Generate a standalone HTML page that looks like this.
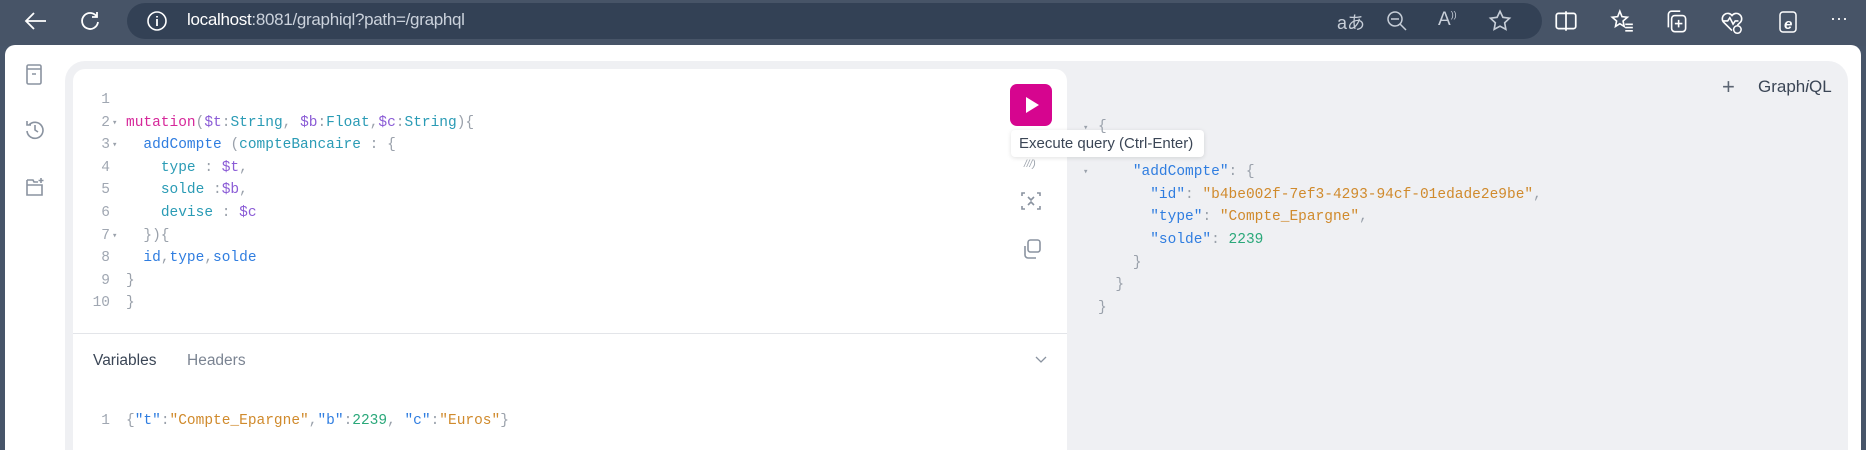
<!DOCTYPE html>
<html><head><meta charset="utf-8"><style>
*{margin:0;padding:0;box-sizing:border-box}
html,body{width:1866px;height:450px;overflow:hidden}
body{background:#475569;font-family:"Liberation Sans",sans-serif;position:relative}
.abs{position:absolute}
.top{left:0;top:0;width:1866px;height:46px;background:#475467}
.pill{left:127px;top:3px;height:36px;border-radius:18px;background:#334155;width:1415px}
.url{left:187px;top:10px;font-size:17px;color:#cbd2dc;letter-spacing:-0.3px}
.url b{color:#fff;font-weight:normal}
.content{left:5px;top:45px;width:1856px;height:405px;background:#fff;border-radius:10px 10px 0 0}
.main{left:65px;top:61px;width:1783px;height:389px;background:#eff0f3;border-radius:20px 20px 0 0}
.ed{left:73px;top:69px;width:994px;height:381px;background:#fff;border-radius:12px 12px 0 0}
.code{font-family:"Liberation Mono",monospace;font-size:14.5px;line-height:22.6px;white-space:pre}
.ln{color:#a0a7b2;text-align:right;width:36px}
.k{color:#d6289a}.v{color:#8b5cd6}.t{color:#2a9bb5}.f{color:#2f7de0}.p{color:#9aa1ab}.s{color:#d08a2c}.n{color:#2aa87a}
.run{left:1010px;top:84px;width:42px;height:42px;background:#d6058f;border-radius:7px}
.tip{left:1011px;top:130px;width:193px;height:27px;background:#fff;border-radius:4px;box-shadow:0 1px 5px rgba(0,0,0,.12);font-size:15px;color:#3b4656;padding:5px 0 0 8px;white-space:nowrap}
.icon{stroke:#8a93a0;fill:none;stroke-width:1.6}
</style></head><body>
<div class="abs top"></div>
<div class="abs pill"></div>
<svg class="abs" style="left:22px;top:9px" width="28" height="24" viewBox="0 0 28 24"><path d="M24 12H5M12 4L4 12l8 8" stroke="#fff" stroke-width="1.8" fill="none"/></svg>
<svg class="abs" style="left:78px;top:9px" width="24" height="24" viewBox="0 0 24 24"><path d="M19 8A8 8 0 1 0 20 13M19 3v5h-5" stroke="#fff" stroke-width="1.8" fill="none"/></svg>
<svg class="abs" style="left:146px;top:10px" width="22" height="22" viewBox="0 0 22 22"><circle cx="11" cy="11" r="9" stroke="#fff" stroke-width="1.6" fill="none"/><path d="M11 9v7M11 6v1.5" stroke="#fff" stroke-width="1.8"/></svg>
<div class="abs url"><b>localhost</b>:8081/graphiql?path=/graphql</div>
<div class="abs" style="left:1337px;top:9px;color:#c7ced8;font-size:18px">aあ</div>
<svg class="abs" style="left:1385px;top:9px" width="24" height="24" viewBox="0 0 24 24"><circle cx="10" cy="10" r="7" stroke="#c7ced8" stroke-width="1.5" fill="none"/><path d="M6 10h8M15 15l6 6" stroke="#c7ced8" stroke-width="1.5"/></svg>
<div class="abs" style="left:1438px;top:9px;color:#c7ced8;font-size:19px">A<sup style="font-size:9px">))</sup></div>
<svg class="abs" style="left:1487px;top:8px" width="26" height="26" viewBox="0 0 24 24"><path d="M12 3l2.7 5.6 6.1.8-4.5 4.2 1.1 6.1L12 16.8 6.6 19.7l1.1-6.1L3.2 9.4l6.1-.8z" stroke="#c7ced8" stroke-width="1.5" fill="none"/></svg>
<svg class="abs" style="left:1553px;top:8px" width="26" height="26" viewBox="0 0 24 24"><rect x="3" y="5" width="18" height="14" rx="2" stroke="#fff" stroke-width="1.6" fill="none"/><path d="M12 3v18" stroke="#fff" stroke-width="1.6"/></svg>
<svg class="abs" style="left:1609px;top:8px" width="26" height="26" viewBox="0 0 24 24"><path d="M10 3l2 5 5 .5-4 3.5 1 5-4-2.5-4 2.5 1-5-4-3.5 5-.5zM15 15h7M15 18h7M15 21h7" stroke="#fff" stroke-width="1.5" fill="none"/></svg>
<svg class="abs" style="left:1664px;top:8px" width="26" height="28" viewBox="0 0 24 26"><rect x="7" y="7" width="13" height="15" rx="3" stroke="#fff" stroke-width="1.5" fill="none"/><path d="M4 18V6a3 3 0 0 1 3-3h8M13.5 11v7M10 14.5h7" stroke="#fff" stroke-width="1.5" fill="none"/></svg>
<svg class="abs" style="left:1719px;top:8px" width="26" height="28" viewBox="0 0 24 26"><path d="M12 21L4 13a5 5 0 0 1 8-6 5 5 0 0 1 8 6l-3 3M4 12h4l2-3 3 6 2-3h3" stroke="#fff" stroke-width="1.5" fill="none"/><circle cx="17" cy="20" r="3.5" stroke="#fff" stroke-width="1.4" fill="none"/></svg>
<svg class="abs" style="left:1776px;top:8px" width="24" height="28" viewBox="0 0 24 26"><rect x="4" y="3" width="16" height="20" rx="3" stroke="#fff" stroke-width="1.5" fill="none"/><text x="8" y="20" font-size="15" font-style="italic" font-weight="bold" fill="#fff" font-family="Liberation Sans">e</text></svg>
<div class="abs" style="left:1830px;top:8px;color:#fff;font-size:18px">···</div>

<div class="abs content"></div>
<svg class="abs" style="left:24px;top:62px" width="22" height="26" viewBox="0 0 22 26"><rect x="3" y="3" width="14" height="19" rx="1.5" class="icon"/><path d="M3 7h14M8 12h4" class="icon"/></svg>
<svg class="abs" style="left:23px;top:118px" width="24" height="24" viewBox="0 0 24 24"><path d="M4 13a8 8 0 1 0 2-6M4 3v4h4M12 7v5l3 2" class="icon"/></svg>
<svg class="abs" style="left:24px;top:175px" width="24" height="24" viewBox="0 0 24 24"><path d="M3 5h6l1 2h4M3 5v15h15v-10H3M17 3v5M14.5 5.5h5" class="icon"/></svg>

<div class="abs main"></div>
<div class="abs ed"></div>
<div class="abs code ln" style="left:74px;top:89px">1
2
3
4
5
6
7
8
9
10</div>
<div class="abs code p" style="left:112px;top:89px;font-size:9px;line-height:22.6px">
▾
▾



▾</div>
<div class="abs code" style="left:126px;top:89px">
<span class="k">mutation</span><span class="p">(</span><span class="v">$t</span><span class="p">:</span><span class="t">String</span><span class="p">, </span><span class="v">$b</span><span class="p">:</span><span class="t">Float</span><span class="p">,</span><span class="v">$c</span><span class="p">:</span><span class="t">String</span><span class="p">){</span>
  <span class="f">addCompte</span> <span class="p">(</span><span class="t">compteBancaire</span> <span class="p">: {</span>
    <span class="t">type</span> <span class="p">:</span> <span class="v">$t</span><span class="p">,</span>
    <span class="t">solde</span> <span class="p">:</span><span class="v">$b</span><span class="p">,</span>
    <span class="t">devise</span> <span class="p">:</span> <span class="v">$c</span>
  <span class="p">}){</span>
  <span class="f">id</span><span class="p">,</span><span class="f">type</span><span class="p">,</span><span class="f">solde</span>
<span class="p">}</span>
<span class="p">}</span></div>
<div class="abs" style="left:73px;top:333px;width:994px;height:1px;background:#e3e5e9"></div>
<div class="abs" style="left:93px;top:352px;font-size:15.5px;color:#3b4656">Variables</div>
<div class="abs" style="left:187px;top:352px;font-size:15.5px;color:#7b8492">Headers</div>
<svg class="abs" style="left:1034px;top:355px" width="14" height="10" viewBox="0 0 14 10"><path d="M2 2l5 5 5-5" stroke="#8a93a0" stroke-width="1.3" fill="none"/></svg>
<div class="abs code ln" style="left:74px;top:410px">1</div>
<div class="abs code" style="left:126px;top:410px"><span class="p">{</span><span class="f">"t"</span><span class="p">:</span><span class="s">"Compte_Epargne"</span><span class="p">,</span><span class="f">"b"</span><span class="p">:</span><span class="n">2239</span><span class="p">, </span><span class="f">"c"</span><span class="p">:</span><span class="s">"Euros"</span><span class="p">}</span></div>

<div class="abs run"></div>
<svg class="abs" style="left:1010px;top:84px" width="42" height="42" viewBox="0 0 42 42"><path d="M16 13l13 8-13 8z" fill="#fff"/></svg>
<div class="abs" style="left:1024px;top:159px;color:#9aa1ab;font-size:10px;font-style:italic">///)</div>
<svg class="abs" style="left:1019px;top:190px" width="24" height="22" viewBox="0 0 24 22"><path d="M3 6V3h3M18 3h3v3M3 16v3h3M18 19h3v-3M9 7l3 3 3-3M9 15l3-3 3 3" class="icon" stroke-width="1.4"/></svg>
<svg class="abs" style="left:1020px;top:237px" width="24" height="24" viewBox="0 0 24 24"><rect x="8" y="3" width="12" height="12" rx="2.5" class="icon"/><path d="M5 9v9a3 3 0 0 0 3 3h8" class="icon"/></svg>
<div class="abs tip">Execute query (Ctrl-Enter)</div>

<div class="abs code p" style="left:1083px;top:117px;font-size:9px">▾</div>
<div class="abs code p" style="left:1083px;top:161px;font-size:9px">▾</div>
<div class="abs code" style="left:1098px;top:116px"><span class="p">{</span>

    <span class="f">"addCompte"</span><span class="p">: {</span>
      <span class="f">"id"</span><span class="p">: </span><span class="s">"b4be002f-7ef3-4293-94cf-01edade2e9be"</span><span class="p">,</span>
      <span class="f">"type"</span><span class="p">: </span><span class="s">"Compte_Epargne"</span><span class="p">,</span>
      <span class="f">"solde"</span><span class="p">: </span><span class="n">2239</span>
    <span class="p">}</span>
  <span class="p">}</span>
<span class="p">}</span></div>
<div class="abs" style="left:1722px;top:74px;font-size:22px;color:#5b6472;font-weight:300">+</div>
<div class="abs" style="left:1758px;top:77px;font-size:17px;color:#3b4656">Graph<i>i</i>QL</div>
</body></html>
